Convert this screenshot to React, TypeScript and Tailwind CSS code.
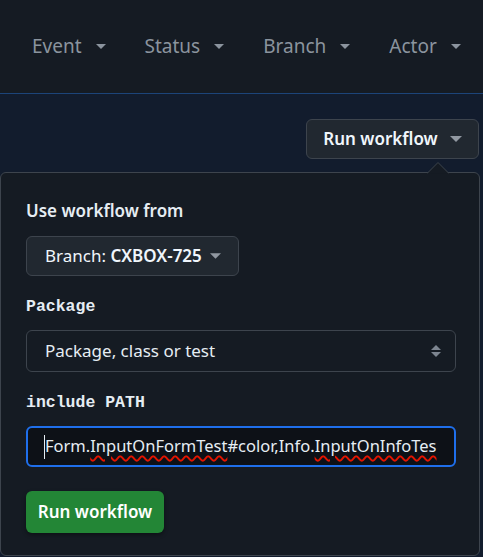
import React from 'react';

const Caret: React.FC<{ className?: string }> = ({ className }) => (
  <svg viewBox="0 0 10 5" className={className} fill="currentColor">
    <path d="M0 0h10L5 5z" />
  </svg>
);

const filters = ['Event', 'Status', 'Branch', 'Actor'];

export default function App() {
  return (
    <div className="w-[483px] h-[557px] overflow-hidden bg-[#121c2d] font-['Noto_Sans',sans-serif] text-[#e6edf3]">
      {/* Filter bar */}
      <header className="h-[94px] bg-[#151b23] border-b border-[#1c4479] flex items-center pl-[32px] gap-[39px] text-[19px] text-[#8b949e]">
        {filters.map((f) => (
          <div key={f} className="flex items-center gap-[14px]">
            <span>{f}</span>
            <Caret className="w-[10px] h-[5px]" />
          </div>
        ))}
      </header>

      <div className="flex flex-col items-end pr-[4px] pt-[25px]">
        <button className="h-[40px] w-[173px] flex items-center justify-center gap-[12px] rounded-md bg-[#212830] border border-[#3d444d] text-[17px] font-semibold text-[#f0f6fc]">
          <span>Run workflow</span>
          <Caret className="w-[12px] h-[6px] text-[#9198a1]" />
        </button>
      </div>

      {/* Popover */}
      <div className="relative mt-[13px] w-[480px] rounded-md border border-[#3d444d] bg-[#151b23] pl-[25px] pt-[27px] pb-[22px]">
        <svg className="absolute -top-[12px] left-[426px] w-[22px] h-[13px]" viewBox="0 0 22 13">
          <path d="M0 12.5L11 1.5L22 12.5" fill="#151b23" stroke="#3d444d" strokeWidth="1" />
        </svg>

        <div className="h-[22px] flex items-center text-[17px] font-semibold">Use workflow from</div>

        <button className="mt-[14px] h-[40px] w-[213px] flex items-center pl-[18px] gap-[8px] rounded-md bg-[#212830] border border-[#3d444d] text-[17px] text-[#f0f6fc]">
          <span>
            Branch: <span className="font-semibold">CXBOX-725</span>
          </span>
          <Caret className="w-[11px] h-[6px] text-[#9198a1]" />
        </button>

        <div className="mt-[20px] h-[22px] flex items-center font-['Liberation_Mono',monospace] font-bold text-[16.5px]">Package</div>

        <div className="mt-[12px] h-[42px] w-[430px] flex items-center justify-between pl-[18px] pr-[14px] rounded-md border border-[#3d444d] bg-[#151b23] text-[17px]">
          <span>Package, class or test</span>
          <div className="flex flex-col gap-[2px] text-[#7d8590]">
            <Caret className="w-[10px] h-[5px] rotate-180" />
            <Caret className="w-[10px] h-[5px]" />
          </div>
        </div>

        <div className="mt-[20px] h-[22px] flex items-center font-['Liberation_Mono',monospace] font-bold text-[16.5px]">include PATH</div>

        <div className="mt-[12px] h-[41px] w-[430px] flex items-center pl-[16px] rounded-md border-2 border-[#1f6feb] bg-[#0d1117] text-[16.5px] whitespace-nowrap">
          <span className="w-px h-[24px] bg-[#e6edf3] shrink-0" />
          <span>
            Form.<span className="underline decoration-wavy decoration-[#e51400] decoration-[1.5px] underline-offset-[3px]">InputOnFormTest</span>#color,Info.<span className="underline decoration-wavy decoration-[#e51400] decoration-[1.5px] underline-offset-[3px]">InputOnInfoTes</span>
          </span>
        </div>

        <button className="mt-[24px] h-[42px] w-[138px] flex items-center justify-center rounded-md bg-[#238636] text-[17px] font-semibold text-white shadow-[0_2px_4px_rgba(0,0,0,0.4)]">
          Run workflow
        </button>
      </div>
    </div>
  );
}
